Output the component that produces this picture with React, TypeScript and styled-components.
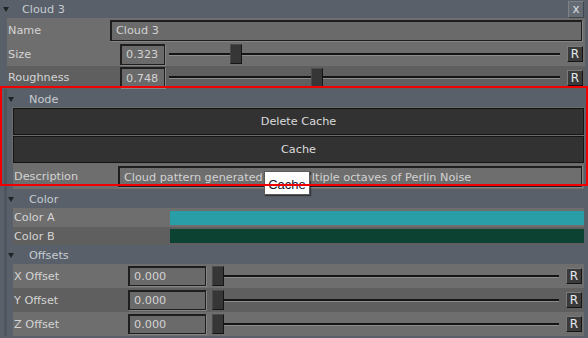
import React from 'react';
import styled, { createGlobalStyle } from 'styled-components';

const GlobalStyle = createGlobalStyle`
  html, body {
    margin: 0;
    padding: 0;
    background: #596069;
  }
  body {
    font-family: "DejaVu Sans", Verdana, sans-serif;
    font-size: 11.25px;
  }
`;

const Page = styled.div`
  position: relative;
  width: 588px;
  height: 338px;
  overflow: hidden;
  background: #596069;
  color: #d4d4d4;
`;

const GroupHeader = styled.div<{ $indent: number; $height: number }>`
  display: flex;
  align-items: center;
  height: ${(p) => p.$height}px;
  padding-left: ${(p) => p.$indent}px;
  padding-top: 1px;
  box-sizing: border-box;
  color: #c6ccd2;
`;

const Arrow = styled.span<{ $gap: number }>`
  width: 0;
  height: 0;
  border-left: 3.5px solid transparent;
  border-right: 3.5px solid transparent;
  border-top: 5px solid #202326;
  margin-right: ${(p) => p.$gap}px;
`;

const HeaderTitle = styled.span`
  flex: 1;
  white-space: nowrap;
`;

const CloseButton = styled.div`
  width: 14px;
  height: 13px;
  margin-right: 4px;
  display: flex;
  align-items: center;
  justify-content: center;
  background: #646b73;
  border: 1px solid #41464d;
  border-top-color: #7b8289;
  border-left-color: #7b8289;
  color: #d8dde2;
  font-size: 12px;
  line-height: 1;
  padding-bottom: 2px;
  box-sizing: content-box;
`;

const TopBody = styled.div`
  margin-left: 7px;
  margin-right: 3px;
`;

const Row = styled.div<{ $dark?: boolean; $height: number }>`
  display: flex;
  align-items: center;
  height: ${(p) => p.$height}px;
  background: ${(p) => (p.$dark ? '#5f5f5f' : '#6e6e6e')};
`;

const Label = styled.div<{ $width: number }>`
  width: ${(p) => p.$width}px;
  flex: none;
  padding-left: 1px;
  white-space: nowrap;
  color: #d4d4d4;
`;

const Field = styled.div<{ $width?: number; $height: number; $light?: boolean }>`
  ${(p) => (p.$width ? `width: ${p.$width}px; flex: none;` : 'flex: 1;')}
  height: ${(p) => p.$height}px;
  box-sizing: border-box;
  display: flex;
  align-items: center;
  padding-left: 4px;
  background: ${(p) => (p.$light ? '#6e6e6e' : '#6a6a6a')};
  border: 1px solid #1e1e1e;
  border-top-width: 2px;
  border-left-width: 2px;
  box-shadow: 1px 1px 0 #858585;
  color: #d2d2d2;
  white-space: nowrap;
  overflow: hidden;
`;

const SliderBox = styled.div<{ $left: number }>`
  position: relative;
  flex: 1;
  height: 20px;
  margin-left: ${(p) => p.$left}px;
  display: flex;
  align-items: center;
`;

const Track = styled.div`
  flex: 1;
  height: 0;
  border-top: 2px solid #151515;
  border-bottom: 1px solid #8c8c8c;
`;

const Thumb = styled.div`
  position: absolute;
  top: 0;
  width: 12px;
  height: 20px;
  box-sizing: border-box;
  background: #363636;
  border: 1px solid #151515;
  border-top-color: #4a4a4a;
  border-left-color: #4a4a4a;
`;

const ResetButton = styled.div`
  width: 16px;
  height: 16px;
  flex: none;
  box-sizing: border-box;
  margin-left: 7px;
  margin-right: 2px;
  display: flex;
  align-items: center;
  justify-content: center;
  background: #3a3a3a;
  border: 1px solid #161616;
  border-top-color: #7a7a7a;
  border-left-color: #7a7a7a;
  color: #e4eaf0;
  font-size: 12px;
`;

const SubGroups = styled.div`
  margin-left: 4px;
  border-left: 3px solid #4f555d;
  margin-right: 4px;
`;

const SubBody = styled.div`
  margin-left: 6px;
`;

const ActionButton = styled.div`
  height: 27px;
  box-sizing: border-box;
  margin-bottom: 1px;
  display: flex;
  align-items: center;
  justify-content: center;
  background: #323232;
  border: 1px solid #161616;
  box-shadow: 0 0 0 1px #6a6a6a;
  color: #dcdcdc;
`;

const Swatch = styled.div<{ $color: string }>`
  flex: 1;
  height: 14px;
  background: ${(p) => p.$color};
`;

const Highlight = styled.div`
  position: absolute;
  left: 0;
  top: 86px;
  width: 588px;
  height: 100px;
  box-sizing: border-box;
  border: 2px solid #f00000;
  z-index: 3;
  pointer-events: none;
`;

const Tooltip = styled.div`
  position: absolute;
  left: 264px;
  top: 171px;
  width: 46px;
  height: 24px;
  box-sizing: border-box;
  display: flex;
  align-items: center;
  justify-content: center;
  padding-top: 2px;
  background: #ffffff;
  border: 1px solid #5a5a5a;
  box-shadow: 1px 1px 1px rgba(0, 0, 0, 0.45);
  color: #151530;
  font-family: "Liberation Sans", Arial, sans-serif;
  font-size: 13px;
  z-index: 2;
`;

type SliderProps = { value: number; max: number; left: number };

const Slider = ({ value, max, left }: SliderProps) => (
  <SliderBox $left={left}>
    <Track />
    <Thumb style={{ left: `calc((100% - 12px) * ${value / max})` }} />
  </SliderBox>
);

type ParamProps = {
  label: string;
  value: number;
  dark?: boolean;
  height: number;
  labelWidth: number;
  fieldWidth: number;
  fieldHeight: number;
  sliderLeft: number;
};

const ParamRow = (p: ParamProps) => (
  <Row $dark={p.dark} $height={p.height}>
    <Label $width={p.labelWidth}>{p.label}</Label>
    <Field $width={p.fieldWidth} $height={p.fieldHeight}>
      {p.value.toFixed(3)}
    </Field>
    <Slider value={p.value} max={2} left={p.sliderLeft} />
    <ResetButton>R</ResetButton>
  </Row>
);

const SubHeader = ({ title, height }: { title: string; height: number }) => (
  <GroupHeader $indent={1} $height={height}>
    <Arrow $gap={15} />
    <HeaderTitle>{title}</HeaderTitle>
  </GroupHeader>
);

const offsets = ['X Offset', 'Y Offset', 'Z Offset'];

export default function App() {
  return (
    <Page>
      <GlobalStyle />
      <GroupHeader $indent={3} $height={18}>
        <Arrow $gap={13} />
        <HeaderTitle>Cloud 3</HeaderTitle>
        <CloseButton>x</CloseButton>
      </GroupHeader>

      <TopBody>
        <Row $height={24}>
          <Label $width={102}>Name</Label>
          <Field $height={21} style={{ marginRight: 3 }}>
            Cloud 3
          </Field>
        </Row>
        <ParamRow
          label="Size"
          value={0.323}
          height={24}
          labelWidth={112}
          fieldWidth={45}
          fieldHeight={21}
          sliderLeft={4}
        />
        <ParamRow
          label="Roughness"
          value={0.748}
          dark
          height={23}
          labelWidth={112}
          fieldWidth={45}
          fieldHeight={21}
          sliderLeft={4}
        />
      </TopBody>

      <SubGroups>
        <SubHeader title="Node" height={19} />
        <SubBody>
          <ActionButton>Delete Cache</ActionButton>
          <ActionButton>Cache</ActionButton>
          <Row $height={25}>
            <Label $width={104}>Description</Label>
            <Field $height={21} $light style={{ marginRight: 2 }}>
              Cloud pattern generated with multiple octaves of Perlin Noise
            </Field>
          </Row>
        </SubBody>

        <SubHeader title="Color" height={19} />
        <SubBody>
          <Row $height={19}>
            <Label $width={156}>Color A</Label>
            <Swatch $color="#2a9ea7" />
          </Row>
          <Row $height={18} $dark>
            <Label $width={156}>Color B</Label>
            <Swatch $color="#0b4232" />
          </Row>
        </SubBody>

        <SubHeader title="Offsets" height={19} />
        <SubBody>
          {offsets.map((name, i) => (
            <ParamRow
              key={name}
              label={name}
              value={0}
              dark={i === 1}
              height={24}
              labelWidth={114}
              fieldWidth={78}
              fieldHeight={20}
              sliderLeft={6}
            />
          ))}
        </SubBody>
      </SubGroups>

      <Tooltip>Cache</Tooltip>
      <Highlight />
    </Page>
  );
}
